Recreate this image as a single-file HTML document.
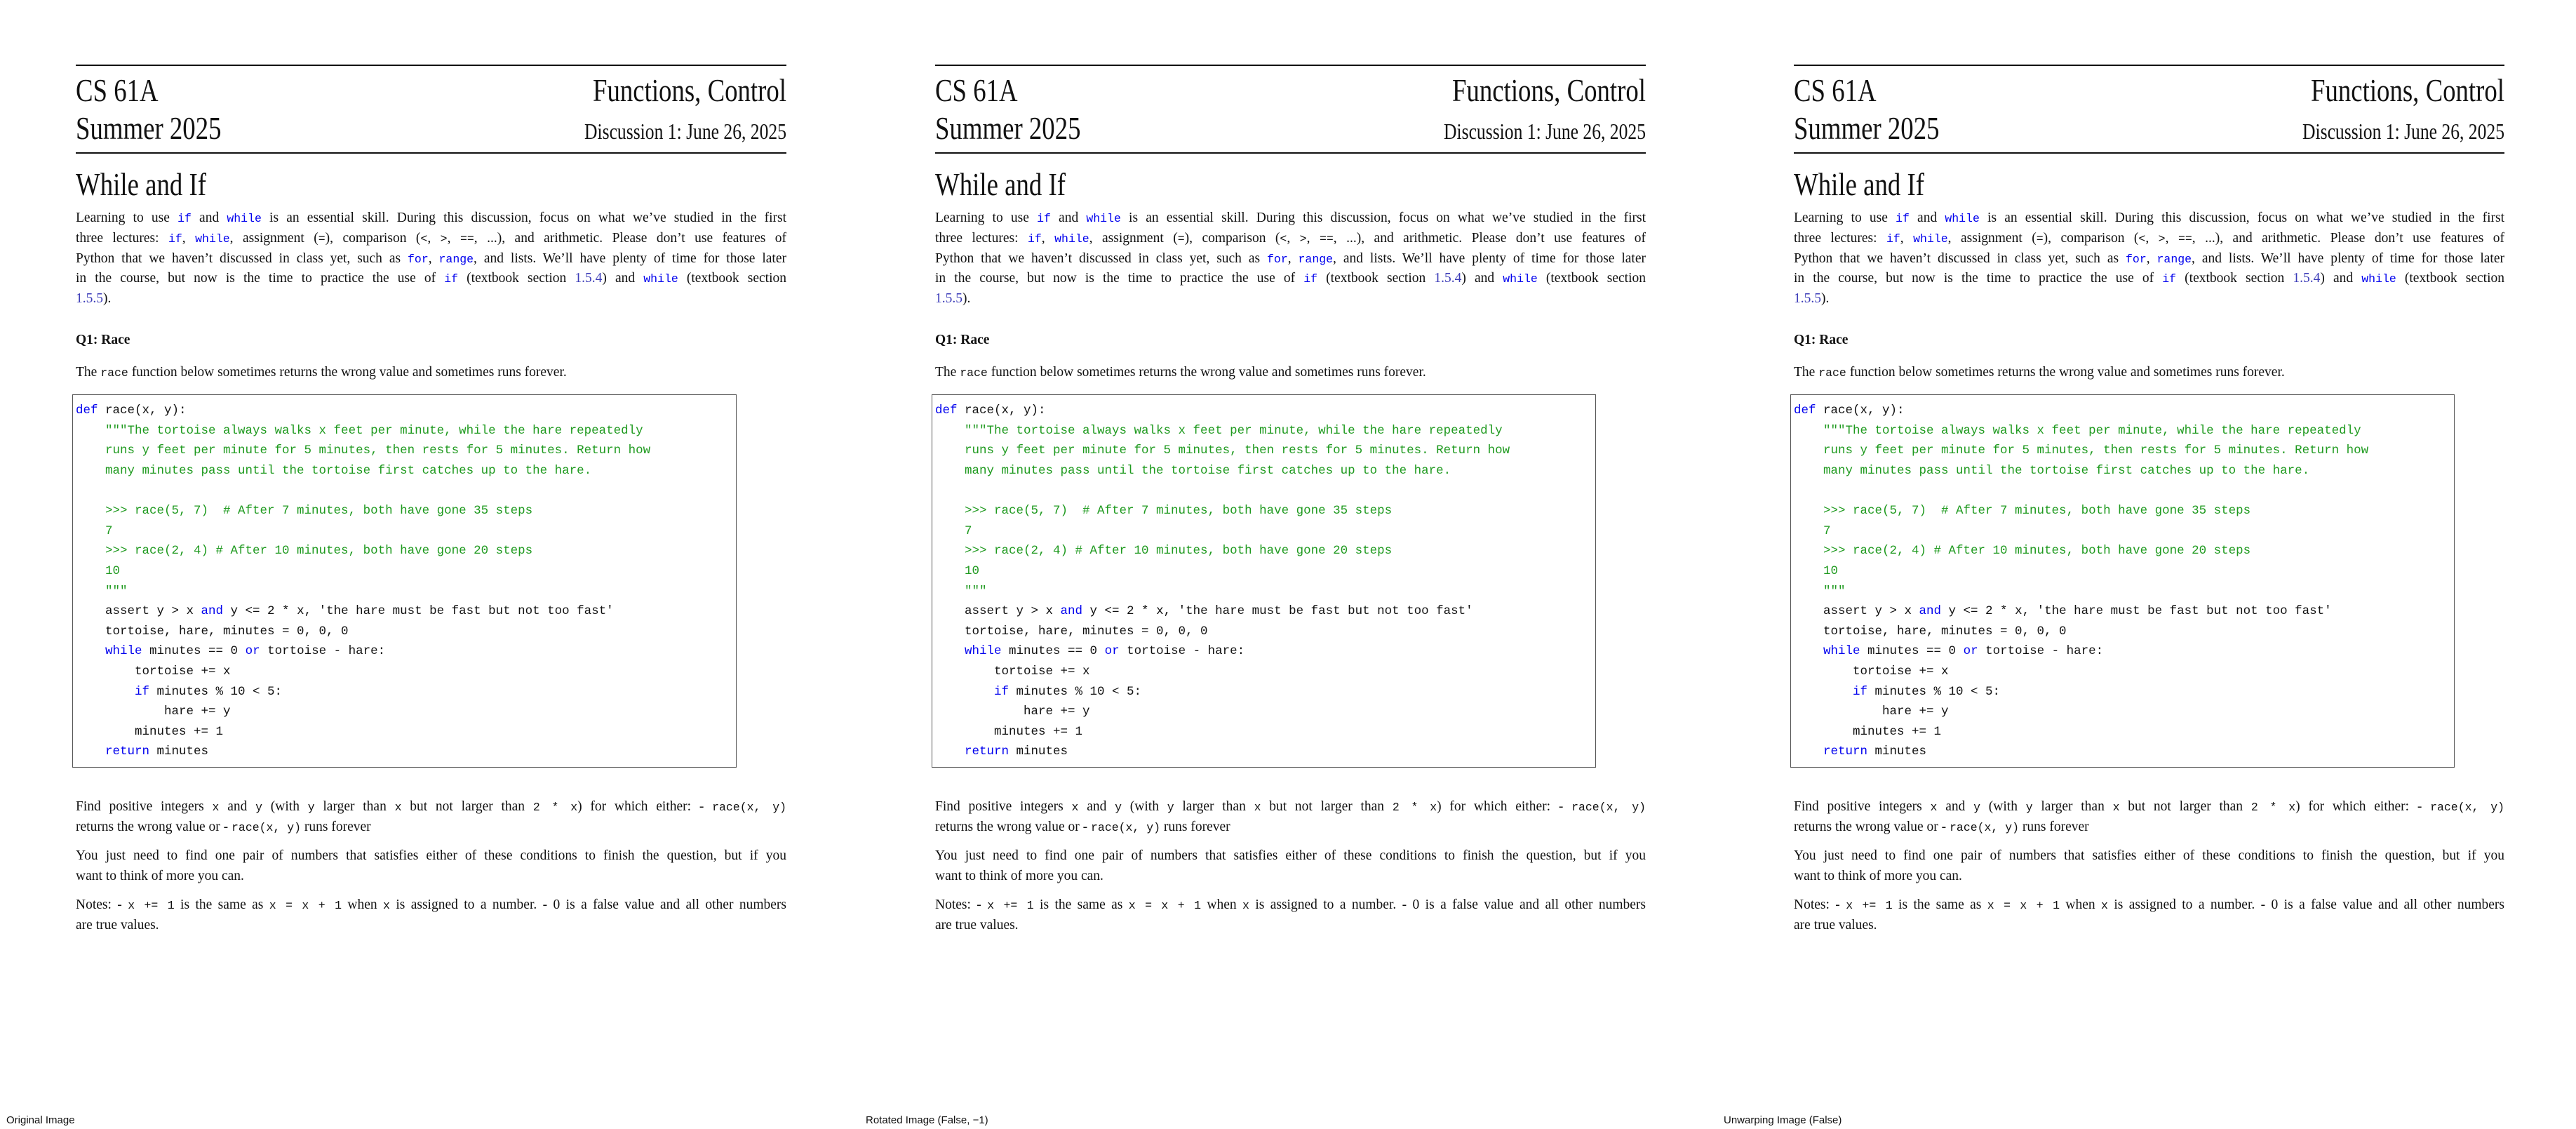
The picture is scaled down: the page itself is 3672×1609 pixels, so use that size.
<!DOCTYPE html>
<html><head><meta charset="utf-8"><style>
body{margin:0;width:3672px;height:1609px;background:#fff;position:relative;overflow:hidden;font-family:"Liberation Serif",serif;color:#111}
.p{position:absolute;top:0;width:1225px;height:1609px}
.a{position:absolute;white-space:nowrap;line-height:1}
.rule{position:absolute;left:108px;width:1013px;height:2px;background:#111}
.h{font-size:46px;display:inline-block;transform:scaleX(0.8)}
.j{left:108px;width:1013px;font-size:19.5px;text-align:justify;text-align-last:justify}
.l{left:108px;font-size:19.5px}
.t{font-family:"Liberation Mono",monospace;font-size:16.5px}
.k{color:#0000ee}
.lk{color:#3c3cb8}
.box{position:absolute;left:103px;top:562px;width:945px;height:530px;border:1.5px solid #555}
.c{position:absolute;left:108px;font-family:"Liberation Mono",monospace;font-size:17.5px;line-height:1;white-space:pre;color:#111;margin-top:3px}
.g{color:#1f9a1f}
.lab{position:absolute;top:1588px;font-family:"Liberation Sans",sans-serif;font-size:15px;color:#111;white-space:nowrap}
</style></head><body>

<div class="p" style="left:0">
<div class="rule" style="top:92px"></div>
<div class="a" style="left:108px;top:106px"><span class="h" style="transform-origin:left">CS 61A</span></div>
<div class="a" style="right:104px;top:106px"><span class="h" style="transform-origin:right">Functions, Control</span></div>
<div class="a" style="left:108px;top:160px"><span class="h" style="transform-origin:left">Summer 2025</span></div>
<div class="a" style="right:104px;top:171px"><span class="h" style="font-size:32px;transform-origin:right">Discussion 1: June 26, 2025</span></div>
<div class="rule" style="top:217px"></div>
<div class="a" style="left:108px;top:240px"><span class="h" style="transform-origin:left">While and If</span></div>
<div class="a j" style="top:301px">Learning to use <span class="t k">if</span> and <span class="t k">while</span> is an essential skill. During this discussion, focus on what we’ve studied in the first</div>
<div class="a j" style="top:330px">three lectures: <span class="t k">if</span>, <span class="t k">while</span>, assignment (<span class="t">=</span>), comparison (<span class="t">&lt;</span>, <span class="t">&gt;</span>, <span class="t">==</span>, ...), and arithmetic. Please don’t use features of</div>
<div class="a j" style="top:359px">Python that we haven’t discussed in class yet, such as <span class="t k">for</span>, <span class="t k">range</span>, and lists. We’ll have plenty of time for those later</div>
<div class="a j" style="top:387px">in the course, but now is the time to practice the use of <span class="t k">if</span> (textbook section <span class="lk">1.5.4</span>) and <span class="t k">while</span> (textbook section</div>
<div class="a l" style="top:416px"><span class="lk">1.5.5</span>).</div>
<div class="a l" style="top:475px;font-weight:bold;font-size:19.5px">Q1: Race</div>
<div class="a l" style="top:521px">The <span class="t">race</span> function below sometimes returns the wrong value and sometimes runs forever.</div>
<div class="box"></div>
<div class="c" style="top:574px"><span class="k">def</span> race(x, y):</div>
<div class="c g" style="top:603px">    """The tortoise always walks x feet per minute, while the hare repeatedly</div>
<div class="c g" style="top:631px">    runs y feet per minute for 5 minutes, then rests for 5 minutes. Return how</div>
<div class="c g" style="top:660px">    many minutes pass until the tortoise first catches up to the hare.</div>
<div class="c g" style="top:717px">    &gt;&gt;&gt; race(5, 7)  # After 7 minutes, both have gone 35 steps</div>
<div class="c g" style="top:746px">    7</div>
<div class="c g" style="top:774px">    &gt;&gt;&gt; race(2, 4) # After 10 minutes, both have gone 20 steps</div>
<div class="c g" style="top:803px">    10</div>
<div class="c g" style="top:832px">    """</div>
<div class="c" style="top:860px">    assert y &gt; x <span class="k">and</span> y &lt;= 2 * x, 'the hare must be fast but not too fast'</div>
<div class="c" style="top:889px">    tortoise, hare, minutes = 0, 0, 0</div>
<div class="c" style="top:917px">    <span class="k">while</span> minutes == 0 <span class="k">or</span> tortoise - hare:</div>
<div class="c" style="top:946px">        tortoise += x</div>
<div class="c" style="top:975px">        <span class="k">if</span> minutes % 10 &lt; 5:</div>
<div class="c" style="top:1003px">            hare += y</div>
<div class="c" style="top:1032px">        minutes += 1</div>
<div class="c" style="top:1060px">    <span class="k">return</span> minutes</div>
<div class="a j" style="top:1140px">Find positive integers <span class="t">x</span> and <span class="t">y</span> (with <span class="t">y</span> larger than <span class="t">x</span> but not larger than <span class="t">2 * x</span>) for which either: - <span class="t">race(x, y)</span></div>
<div class="a l" style="top:1169px">returns the wrong value or - <span class="t">race(x, y)</span> runs forever</div>
<div class="a j" style="top:1210px">You just need to find one pair of numbers that satisfies either of these conditions to finish the question, but if you</div>
<div class="a l" style="top:1239px">want to think of more you can.</div>
<div class="a j" style="top:1280px">Notes: - <span class="t">x += 1</span> is the same as <span class="t">x = x + 1</span> when <span class="t">x</span> is assigned to a number. - 0 is a false value and all other numbers</div>
<div class="a l" style="top:1309px">are true values.</div>
</div>

<div class="p" style="left:1225px">
<div class="rule" style="top:92px"></div>
<div class="a" style="left:108px;top:106px"><span class="h" style="transform-origin:left">CS 61A</span></div>
<div class="a" style="right:104px;top:106px"><span class="h" style="transform-origin:right">Functions, Control</span></div>
<div class="a" style="left:108px;top:160px"><span class="h" style="transform-origin:left">Summer 2025</span></div>
<div class="a" style="right:104px;top:171px"><span class="h" style="font-size:32px;transform-origin:right">Discussion 1: June 26, 2025</span></div>
<div class="rule" style="top:217px"></div>
<div class="a" style="left:108px;top:240px"><span class="h" style="transform-origin:left">While and If</span></div>
<div class="a j" style="top:301px">Learning to use <span class="t k">if</span> and <span class="t k">while</span> is an essential skill. During this discussion, focus on what we’ve studied in the first</div>
<div class="a j" style="top:330px">three lectures: <span class="t k">if</span>, <span class="t k">while</span>, assignment (<span class="t">=</span>), comparison (<span class="t">&lt;</span>, <span class="t">&gt;</span>, <span class="t">==</span>, ...), and arithmetic. Please don’t use features of</div>
<div class="a j" style="top:359px">Python that we haven’t discussed in class yet, such as <span class="t k">for</span>, <span class="t k">range</span>, and lists. We’ll have plenty of time for those later</div>
<div class="a j" style="top:387px">in the course, but now is the time to practice the use of <span class="t k">if</span> (textbook section <span class="lk">1.5.4</span>) and <span class="t k">while</span> (textbook section</div>
<div class="a l" style="top:416px"><span class="lk">1.5.5</span>).</div>
<div class="a l" style="top:475px;font-weight:bold;font-size:19.5px">Q1: Race</div>
<div class="a l" style="top:521px">The <span class="t">race</span> function below sometimes returns the wrong value and sometimes runs forever.</div>
<div class="box"></div>
<div class="c" style="top:574px"><span class="k">def</span> race(x, y):</div>
<div class="c g" style="top:603px">    """The tortoise always walks x feet per minute, while the hare repeatedly</div>
<div class="c g" style="top:631px">    runs y feet per minute for 5 minutes, then rests for 5 minutes. Return how</div>
<div class="c g" style="top:660px">    many minutes pass until the tortoise first catches up to the hare.</div>
<div class="c g" style="top:717px">    &gt;&gt;&gt; race(5, 7)  # After 7 minutes, both have gone 35 steps</div>
<div class="c g" style="top:746px">    7</div>
<div class="c g" style="top:774px">    &gt;&gt;&gt; race(2, 4) # After 10 minutes, both have gone 20 steps</div>
<div class="c g" style="top:803px">    10</div>
<div class="c g" style="top:832px">    """</div>
<div class="c" style="top:860px">    assert y &gt; x <span class="k">and</span> y &lt;= 2 * x, 'the hare must be fast but not too fast'</div>
<div class="c" style="top:889px">    tortoise, hare, minutes = 0, 0, 0</div>
<div class="c" style="top:917px">    <span class="k">while</span> minutes == 0 <span class="k">or</span> tortoise - hare:</div>
<div class="c" style="top:946px">        tortoise += x</div>
<div class="c" style="top:975px">        <span class="k">if</span> minutes % 10 &lt; 5:</div>
<div class="c" style="top:1003px">            hare += y</div>
<div class="c" style="top:1032px">        minutes += 1</div>
<div class="c" style="top:1060px">    <span class="k">return</span> minutes</div>
<div class="a j" style="top:1140px">Find positive integers <span class="t">x</span> and <span class="t">y</span> (with <span class="t">y</span> larger than <span class="t">x</span> but not larger than <span class="t">2 * x</span>) for which either: - <span class="t">race(x, y)</span></div>
<div class="a l" style="top:1169px">returns the wrong value or - <span class="t">race(x, y)</span> runs forever</div>
<div class="a j" style="top:1210px">You just need to find one pair of numbers that satisfies either of these conditions to finish the question, but if you</div>
<div class="a l" style="top:1239px">want to think of more you can.</div>
<div class="a j" style="top:1280px">Notes: - <span class="t">x += 1</span> is the same as <span class="t">x = x + 1</span> when <span class="t">x</span> is assigned to a number. - 0 is a false value and all other numbers</div>
<div class="a l" style="top:1309px">are true values.</div>
</div>

<div class="p" style="left:2449px">
<div class="rule" style="top:92px"></div>
<div class="a" style="left:108px;top:106px"><span class="h" style="transform-origin:left">CS 61A</span></div>
<div class="a" style="right:104px;top:106px"><span class="h" style="transform-origin:right">Functions, Control</span></div>
<div class="a" style="left:108px;top:160px"><span class="h" style="transform-origin:left">Summer 2025</span></div>
<div class="a" style="right:104px;top:171px"><span class="h" style="font-size:32px;transform-origin:right">Discussion 1: June 26, 2025</span></div>
<div class="rule" style="top:217px"></div>
<div class="a" style="left:108px;top:240px"><span class="h" style="transform-origin:left">While and If</span></div>
<div class="a j" style="top:301px">Learning to use <span class="t k">if</span> and <span class="t k">while</span> is an essential skill. During this discussion, focus on what we’ve studied in the first</div>
<div class="a j" style="top:330px">three lectures: <span class="t k">if</span>, <span class="t k">while</span>, assignment (<span class="t">=</span>), comparison (<span class="t">&lt;</span>, <span class="t">&gt;</span>, <span class="t">==</span>, ...), and arithmetic. Please don’t use features of</div>
<div class="a j" style="top:359px">Python that we haven’t discussed in class yet, such as <span class="t k">for</span>, <span class="t k">range</span>, and lists. We’ll have plenty of time for those later</div>
<div class="a j" style="top:387px">in the course, but now is the time to practice the use of <span class="t k">if</span> (textbook section <span class="lk">1.5.4</span>) and <span class="t k">while</span> (textbook section</div>
<div class="a l" style="top:416px"><span class="lk">1.5.5</span>).</div>
<div class="a l" style="top:475px;font-weight:bold;font-size:19.5px">Q1: Race</div>
<div class="a l" style="top:521px">The <span class="t">race</span> function below sometimes returns the wrong value and sometimes runs forever.</div>
<div class="box"></div>
<div class="c" style="top:574px"><span class="k">def</span> race(x, y):</div>
<div class="c g" style="top:603px">    """The tortoise always walks x feet per minute, while the hare repeatedly</div>
<div class="c g" style="top:631px">    runs y feet per minute for 5 minutes, then rests for 5 minutes. Return how</div>
<div class="c g" style="top:660px">    many minutes pass until the tortoise first catches up to the hare.</div>
<div class="c g" style="top:717px">    &gt;&gt;&gt; race(5, 7)  # After 7 minutes, both have gone 35 steps</div>
<div class="c g" style="top:746px">    7</div>
<div class="c g" style="top:774px">    &gt;&gt;&gt; race(2, 4) # After 10 minutes, both have gone 20 steps</div>
<div class="c g" style="top:803px">    10</div>
<div class="c g" style="top:832px">    """</div>
<div class="c" style="top:860px">    assert y &gt; x <span class="k">and</span> y &lt;= 2 * x, 'the hare must be fast but not too fast'</div>
<div class="c" style="top:889px">    tortoise, hare, minutes = 0, 0, 0</div>
<div class="c" style="top:917px">    <span class="k">while</span> minutes == 0 <span class="k">or</span> tortoise - hare:</div>
<div class="c" style="top:946px">        tortoise += x</div>
<div class="c" style="top:975px">        <span class="k">if</span> minutes % 10 &lt; 5:</div>
<div class="c" style="top:1003px">            hare += y</div>
<div class="c" style="top:1032px">        minutes += 1</div>
<div class="c" style="top:1060px">    <span class="k">return</span> minutes</div>
<div class="a j" style="top:1140px">Find positive integers <span class="t">x</span> and <span class="t">y</span> (with <span class="t">y</span> larger than <span class="t">x</span> but not larger than <span class="t">2 * x</span>) for which either: - <span class="t">race(x, y)</span></div>
<div class="a l" style="top:1169px">returns the wrong value or - <span class="t">race(x, y)</span> runs forever</div>
<div class="a j" style="top:1210px">You just need to find one pair of numbers that satisfies either of these conditions to finish the question, but if you</div>
<div class="a l" style="top:1239px">want to think of more you can.</div>
<div class="a j" style="top:1280px">Notes: - <span class="t">x += 1</span> is the same as <span class="t">x = x + 1</span> when <span class="t">x</span> is assigned to a number. - 0 is a false value and all other numbers</div>
<div class="a l" style="top:1309px">are true values.</div>
</div>

<div class="lab" style="left:9px">Original Image</div>
<div class="lab" style="left:1234px">Rotated Image (False, −1)</div>
<div class="lab" style="left:2457px">Unwarping Image (False)</div>
</body></html>
